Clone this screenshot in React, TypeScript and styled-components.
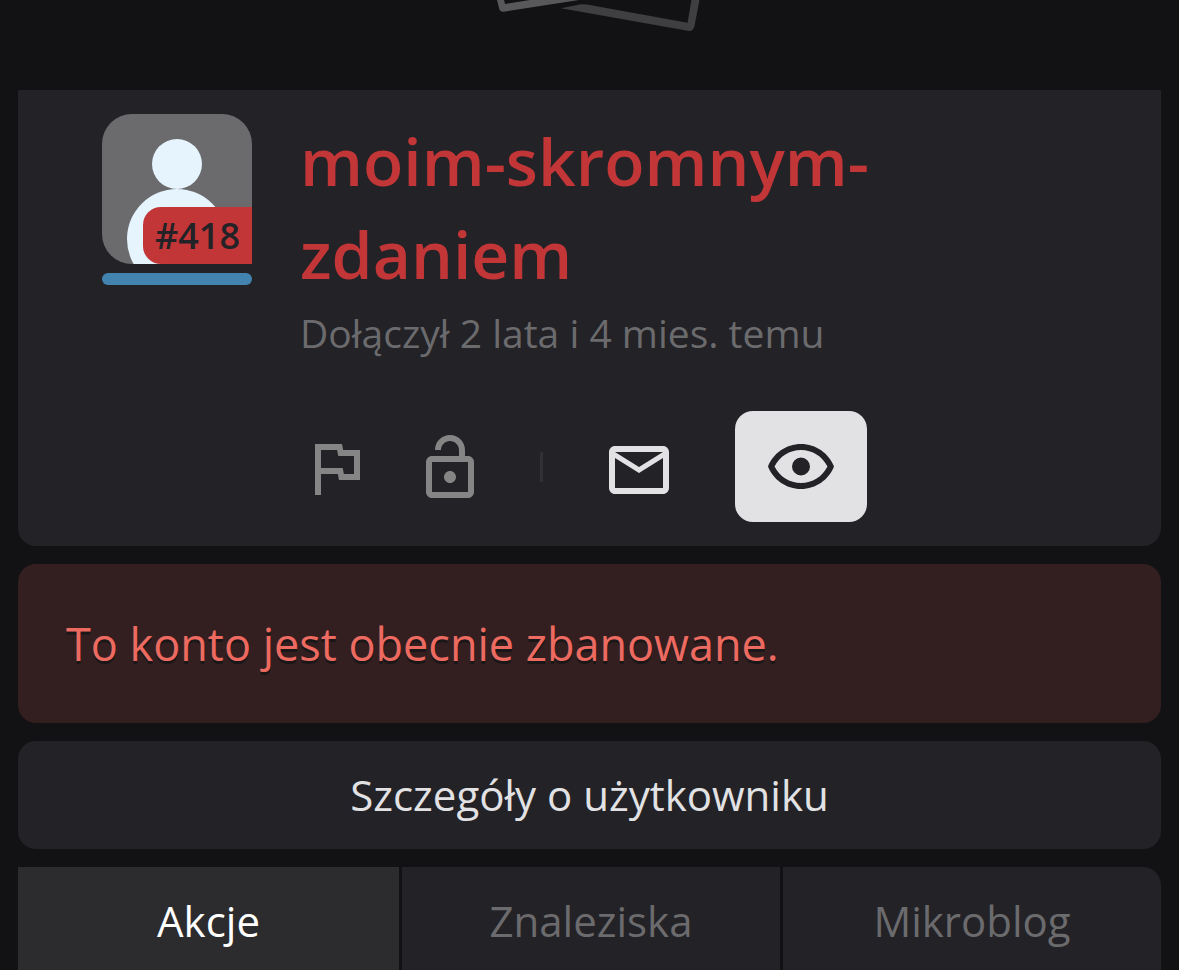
import React from "react";
import styled, { createGlobalStyle } from "styled-components";

const GlobalStyle = createGlobalStyle`
  *, *::before, *::after { box-sizing: border-box; }
  html { scrollbar-width: none; }
  body {
    margin: 0;
    background: #121214;
    color: #e2e2e4;
    font-family: "Open Sans", "Noto Sans", sans-serif;
  }
  button { font: inherit; color: inherit; border: 0; background: none; cursor: pointer; }
  h1, p { margin: 0; }
  svg { display: block; }
`;

const Page = styled.div`
  padding: 0 18px;
`;

const Banner = styled.header`
  height: 90px;
  display: flex;
  justify-content: center;
`;

const Content = styled.main`
  display: flex;
  flex-direction: column;
  gap: 18px;
`;

const ProfileCard = styled.section`
  display: flex;
  gap: 48px;
  padding: 24px 84px;
  background: #232227;
  border-radius: 0 0 18px 18px;
`;

const AvatarColumn = styled.div`
  flex: none;
  display: flex;
  flex-direction: column;
  gap: 9px;
  width: 150px;
`;

const Avatar = styled.div`
  position: relative;
  height: 150px;
  overflow: hidden;
  border-radius: 30px 30px 0 30px;
  background: #6b6b6d;
`;

const Rank = styled.span`
  position: absolute;
  right: 0;
  bottom: 0;
  padding: 0 12px;
  border-radius: 18px 0 0 18px;
  background: #c23637;
  color: #232227;
  font-size: 36px;
  font-weight: 600;
  line-height: 57px;
`;

const GenderBar = styled.div`
  height: 12px;
  border-radius: 6px;
  background: #4383b0;
`;

const Info = styled.div`
  flex: 1;
  min-width: 0;
`;

const Username = styled.h1`
  color: #c23637;
  font-size: 66px;
  font-weight: 600;
  line-height: 93px;
`;

const Joined = styled.p`
  margin-top: 6px;
  color: #6b6b6d;
  font-size: 39px;
  line-height: 54px;
`;

const Actions = styled.div`
  display: flex;
  align-items: center;
  margin-top: 51px;
`;

const ActionGroup = styled.div<{ $gap: number }>`
  display: flex;
  align-items: center;
  gap: ${(p) => p.$gap}px;
`;

const ActionButton = styled.button<{ $tone?: "muted" | "plain" | "filled" }>`
  padding: ${(p) => (p.$tone === "filled" ? "21px 30px 18px" : "21px 0 18px")};
  border-radius: 18px;
  color: ${(p) => (p.$tone === "muted" ? "#858586" : p.$tone === "filled" ? "#232227" : "#e2e2e4")};
  background: ${(p) => (p.$tone === "filled" ? "#e2e2e4" : "transparent")};
`;

const Divider = styled.span`
  width: 3px;
  height: 30px;
  margin: 0 60px 0 54px;
  background: #303035;
`;

const Alert = styled.p`
  padding: 48px;
  border-radius: 18px;
  background: #341f20;
  color: #ed6a60;
  font-size: 45px;
  line-height: 63px;
  text-shadow: 0 3px 0 #1a1718;
`;

const DetailsButton = styled.button`
  && {
    padding: 24px;
    border-radius: 18px;
    background: #232227;
    font-size: 42px;
    line-height: 60px;
  }
`;

const Tabs = styled.nav`
  display: grid;
  grid-template-columns: repeat(3, 1fr);
  overflow: hidden;
  border-radius: 0 18px 0 0;
`;

const Tab = styled.a<{ $active?: boolean }>`
  padding: 24px 0;
  background: ${(p) => (p.$active ? "#2c2c2e" : "#232227")};
  color: ${(p) => (p.$active ? "#ffffff" : "#6b6b6d")};
  font-size: 42px;
  line-height: 60px;
  text-align: center;
  text-decoration: none;

  & + & { border-left: 3px solid #121214; }
`;

const Icon = ({ d, viewBox = "0 0 24 24" }: { d: string; viewBox?: string }) => (
  <svg width="72" height="72" viewBox={viewBox} fill="currentColor" aria-hidden="true">
    <path d={d} />
  </svg>
);

const flag =
  "M12.36 6l.4 2H18v6h-3.36l-.4-2H7V6h5.36M14 4H5v17h2v-7h5.6l.4 2h7V6h-5.6L14 4z";
const lockOpen =
  "M12 17c1.1 0 2-.9 2-2s-.9-2-2-2-2 .9-2 2 .9 2 2 2zm6-9h-1V6c0-2.76-2.24-5-5-5S7 3.24 7 6h2c0-1.66 1.34-3 3-3s3 1.34 3 3v2H6c-1.1 0-2 .9-2 2v10c0 1.1.9 2 2 2h12c1.1 0 2-.9 2-2V10c0-1.1-.9-2-2-2zm0 12H6V10h12v10z";
const mail =
  "M22 6c0-1.1-.9-2-2-2H4c-1.1 0-2 .9-2 2v12c0 1.1.9 2 2 2h16c1.1 0 2-.9 2-2V6zm-2 0l-8 5-8-5h16zm0 12H4V8l8 5 8-5v10z";
const eye =
  "M12 6c3.79 0 7.17 2.13 8.82 5.5C19.17 14.87 15.79 17 12 17s-7.17-2.13-8.82-5.5C4.83 8.13 8.21 6 12 6m0-2C7 4 2.73 7.11 1 11.5 2.73 15.89 7 19 12 19s9.27-3.11 11-7.5C21.27 7.11 17 4 12 4zM12 8.5a3 3 0 1 0 0 6 3 3 0 0 0 0-6z";

export default function App() {
  return (
    <>
      <GlobalStyle />
      <Page>
        <Banner>
          <svg width="241" height="40" viewBox="0 0 241 40" aria-hidden="true">
            <path d="M28 0 L30 8 Q31 12.5 35 11.7 L110 0 H61 L36 4 L35 0Z" fill="#58585a" />
            <path d="M92 8.3 L112 4.2 Q115 4 118 4.5 L218.500 22.700 L222.500 0 H230.500 L225.500 26 Q224.500 31 220 31Z" fill="#3f3f41" />
          </svg>
        </Banner>
        <Content>
          <ProfileCard>
            <AvatarColumn>
              <Avatar>
                <svg width="150" height="150" viewBox="0 0 150 150" fill="#e6f4fd" aria-hidden="true">
                  <circle cx="75" cy="50" r="25" />
                  <circle cx="75" cy="125" r="50" />
                </svg>
                <Rank>#418</Rank>
              </Avatar>
              <GenderBar />
            </AvatarColumn>
            <Info>
              <Username>moim-skromnym-zdaniem</Username>
              <Joined>Dołączył 2 lata i 4 mies. temu</Joined>
              <Actions>
                <ActionGroup $gap={42}>
                  <ActionButton $tone="muted" aria-label="Zgłoś">
                    <Icon d={flag} />
                  </ActionButton>
                  <ActionButton $tone="muted" aria-label="Zablokuj">
                    <Icon d={lockOpen} />
                  </ActionButton>
                </ActionGroup>
                <Divider />
                <ActionGroup $gap={60}>
                  <ActionButton $tone="plain" aria-label="Wiadomość">
                    <Icon d={mail} viewBox="0 -0.67 24 24" />
                  </ActionButton>
                  <ActionButton $tone="filled" aria-label="Obserwuj">
                    <Icon d={eye} />
                  </ActionButton>
                </ActionGroup>
              </Actions>
            </Info>
          </ProfileCard>
          <Alert role="alert">To konto jest obecnie zbanowane.</Alert>
          <DetailsButton>Szczegóły o użytkowniku</DetailsButton>
          <Tabs>
            <Tab href="#akcje" $active aria-current="page">Akcje</Tab>
            <Tab href="#znaleziska">Znaleziska</Tab>
            <Tab href="#mikroblog">Mikroblog</Tab>
          </Tabs>
        </Content>
      </Page>
    </>
  );
}
